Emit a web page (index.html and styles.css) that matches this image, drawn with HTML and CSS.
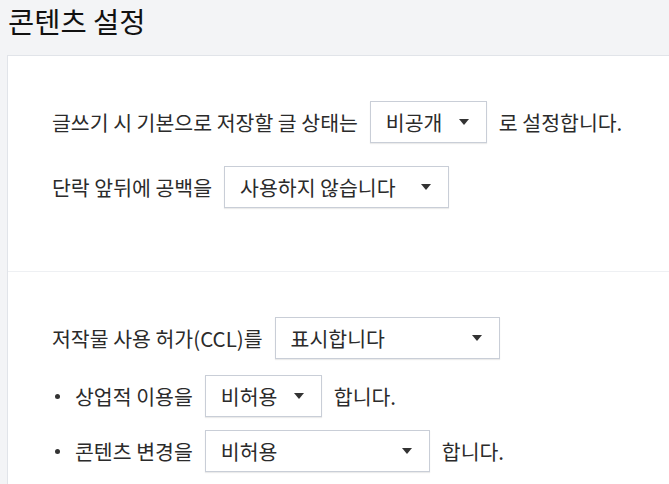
FILE: index.html
```html
<!DOCTYPE html>
<html>
<head>
<meta charset="UTF-8">
<meta name="viewport" content="width=device-width, initial-scale=1.0">
<title>콘텐츠 설정</title>
<link rel="stylesheet" href="styles.css">
</head>
<body>
<h1 class="title">콘텐츠 설정</h1>

<div class="card">
	<div class="section">
		<div class="row">
			<span>글쓰기 시 기본으로 저장할 글 상태는</span>
			<div class="select w-small"><span>비공개</span><i class="arrow"></i></div>
			<span>로 설정합니다.</span>
		</div>
		<div class="row">
			<span>단락 앞뒤에 공백을</span>
			<div class="select w-large"><span>사용하지 않습니다</span><i class="arrow"></i></div>
		</div>
	</div>

	<div class="section">
		<div class="row">
			<span>저작물 사용 허가(CCL)를</span>
			<div class="select w-large"><span>표시합니다</span><i class="arrow"></i></div>
		</div>
		<ul class="sub">
			<li class="row">
				<span>상업적 이용을</span>
				<div class="select w-small"><span>비허용</span><i class="arrow"></i></div>
				<span>합니다.</span>
			</li>
			<li class="row">
				<span>콘텐츠 변경을</span>
				<div class="select w-large"><span>비허용</span><i class="arrow"></i></div>
				<span>합니다.</span>
			</li>
		</ul>
	</div>
</div>
</body>
</html>
```

FILE: styles.css
```css
html, body {
  margin: 0;
  overflow: hidden;
}

body {
  background-color: #f3f4f6;
  color: #2b2b2b;
  font-family: "Noto Sans CJK KR", "Noto Sans", sans-serif;
  font-size: 20.5px;
}

.title {
  margin: 0;
  padding: 1px 8px 0;
  height: 54px;
  font-size: 28.5px;
  font-weight: 400;
  line-height: 40px;
  color: #111;
}

.card {
  margin-left: 7px;
  background-color: #fff;
  border: 1px solid #e1e4e9;
  border-right: none;
  min-height: 500px;
}

.section {
  padding: 45px 0 63px 44px;
}

.section + .section {
  border-top: 1px solid #eef0f3;
  padding-top: 45px;
}

.row {
  display: flex;
  align-items: center;
  gap: 12px;
  height: 42px;
  line-height: 1;
}

.row + .row {
  margin-top: 23px;
}

.select {
  display: flex;
  align-items: center;
  justify-content: space-between;
  box-sizing: border-box;
  height: 42px;
  padding: 0 17px 0 15px;
  background-color: #fff;
  border: 1px solid #c9ced7;
  box-shadow: 0 1px 1px rgba(0, 0, 0, 0.08);
}

.w-small {
  width: 117px;
}

.w-large {
  width: 225px;
}

.arrow {
  width: 0;
  height: 0;
  border-left: 5px solid transparent;
  border-right: 5px solid transparent;
  border-top: 6px solid #333;
}

.sub {
  list-style: none;
  margin: 16px 0 0;
  padding: 0;
}

.sub .row + .row {
  margin-top: 13px;
}

.sub .row::before {
  content: "";
  width: 5px;
  height: 5px;
  border-radius: 50%;
  background-color: #333;
  margin: 0 3px 0 3px;
}
```
